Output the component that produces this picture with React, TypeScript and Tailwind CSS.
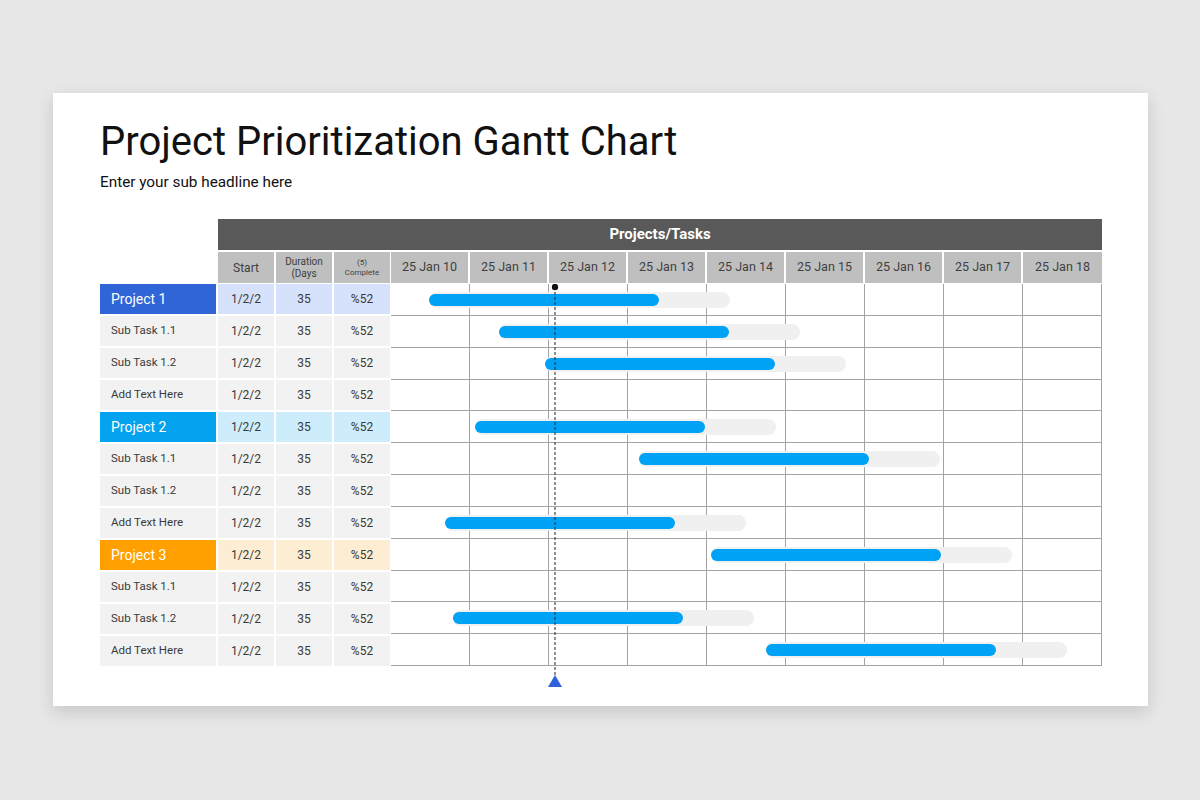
import React from "react";

type Row = {
  name: string;
  kind: "p1" | "p2" | "p3" | "sub";
  bar?: number; // left offset of the bar inside the timeline, px
};

const rows: Row[] = [
  { name: "Project 1", kind: "p1", bar: 38 },
  { name: "Sub Task 1.1", kind: "sub", bar: 108 },
  { name: "Sub Task 1.2", kind: "sub", bar: 154 },
  { name: "Add Text Here", kind: "sub" },
  { name: "Project 2", kind: "p2", bar: 84 },
  { name: "Sub Task 1.1", kind: "sub", bar: 248 },
  { name: "Sub Task 1.2", kind: "sub" },
  { name: "Add Text Here", kind: "sub", bar: 54 },
  { name: "Project 3", kind: "p3", bar: 320 },
  { name: "Sub Task 1.1", kind: "sub" },
  { name: "Sub Task 1.2", kind: "sub", bar: 62 },
  { name: "Add Text Here", kind: "sub", bar: 375 },
];

const days = ["10", "11", "12", "13", "14", "15", "16", "17", "18"];

const nameStyles = {
  p1: "bg-[#3065d8] text-white text-[14px]",
  p2: "bg-[#03a3ef] text-white text-[14px]",
  p3: "bg-[#ffa000] text-white text-[14px]",
  sub: "bg-[#f2f2f2] text-[#3a3a3a] text-[11.5px]",
};

const cellStyles = {
  p1: "bg-[#d6e2fb]",
  p2: "bg-[#cdedfc]",
  p3: "bg-[#fdeed3]",
  sub: "bg-[#f2f2f2]",
};

function TodayMarker() {
  return (
    <svg
      className="absolute left-[156px] top-0"
      width="16"
      height="406"
      viewBox="0 0 16 406"
    >
      <line x1="8" y1="3" x2="8" y2="392" stroke="#222" strokeWidth="1" strokeDasharray="3 2" />
      <circle cx="8" cy="3" r="3.2" fill="#111" />
      <polygon points="8,391 1,403 15,403" fill="#2f62d8" />
    </svg>
  );
}

export default function App() {
  return (
    <div className="min-h-[800px] bg-[#e8e7e8] pl-[53px] pt-[93px] font-['Roboto',sans-serif]">
      <div className="h-[613px] w-[1095px] bg-white pl-[47px] pt-[29px] shadow-[0_6px_16px_rgba(0,0,0,0.14)]">
        <h1 className="text-[40px] leading-[40px] text-[#111]">Project Prioritization Gantt Chart</h1>
        <p className="mt-[13px] text-[15.3px] leading-[15px] text-[#111]">Enter your sub headline here</p>

        <div className="mt-[29px] w-[1002px]">
          <div className="ml-[118px] flex h-[31px] w-[884px] items-center justify-center bg-[#595959] text-[15px] font-bold text-white">
            Projects/Tasks
          </div>

          <div className="mt-[2px] flex h-[31px]">
            <div className="w-[118px] shrink-0" />
            <div className="flex w-[172px] shrink-0 gap-[2px] text-[#404040]">
              <div className="flex w-[56px] items-center justify-center bg-[#bfbfbf] text-[12px]">Start</div>
              <div className="flex w-[56px] flex-col items-center justify-center bg-[#bfbfbf] text-[10px] leading-[12px]">
                <span>Duration</span>
                <span>(Days</span>
              </div>
              <div className="flex w-[56px] flex-col items-center justify-center bg-[#bfbfbf] text-[8px] leading-[10px]">
                <span>(5)</span>
                <span>Complete</span>
              </div>
            </div>
            <div className="ml-px grid w-[711px] shrink-0 grid-cols-9">
              {days.map((d) => (
                <div
                  key={d}
                  className="mr-[2px] flex items-center justify-center bg-[#bfbfbf] text-[12.5px] text-[#404040] last:mr-0"
                >
                  25 Jan {d}
                </div>
              ))}
            </div>
          </div>

          <div className="mt-px flex">
            <div className="flex w-[290px] shrink-0 flex-col gap-[2px]">
              {rows.map((r, i) => (
                <div key={i} className="flex h-[30px] gap-[2px] text-[12px] text-[#3a3a3a]">
                  <div className={`flex w-[116px] items-center pl-[11px] ${nameStyles[r.kind]}`}>{r.name}</div>
                  <div className={`flex w-[56px] items-center justify-center ${cellStyles[r.kind]}`}>1/2/2</div>
                  <div className={`flex w-[56px] items-center justify-center ${cellStyles[r.kind]}`}>35</div>
                  <div className={`flex w-[56px] items-center justify-center ${cellStyles[r.kind]}`}>%52</div>
                </div>
              ))}
            </div>

            <div className="relative ml-px grid h-[382px] w-[711px] shrink-0 grid-rows-12">
              {rows.map((r, i) => (
                <div key={i} className="relative grid grid-cols-9">
                  {days.map((d) => (
                    <div key={d} className="border-b border-r border-[#a3a3a3]" />
                  ))}
                  {r.bar !== undefined && (
                    <div
                      className="absolute top-1/2 h-[16px] w-[301px] -translate-y-1/2 rounded-full bg-[#f0f0f0]"
                      style={{ left: r.bar }}
                    >
                      <div className="mt-[2px] h-[12px] w-[230px] rounded-full bg-[#00a2f5]" />
                    </div>
                  )}
                </div>
              ))}
              <TodayMarker />
            </div>
          </div>
        </div>
      </div>
    </div>
  );
}
